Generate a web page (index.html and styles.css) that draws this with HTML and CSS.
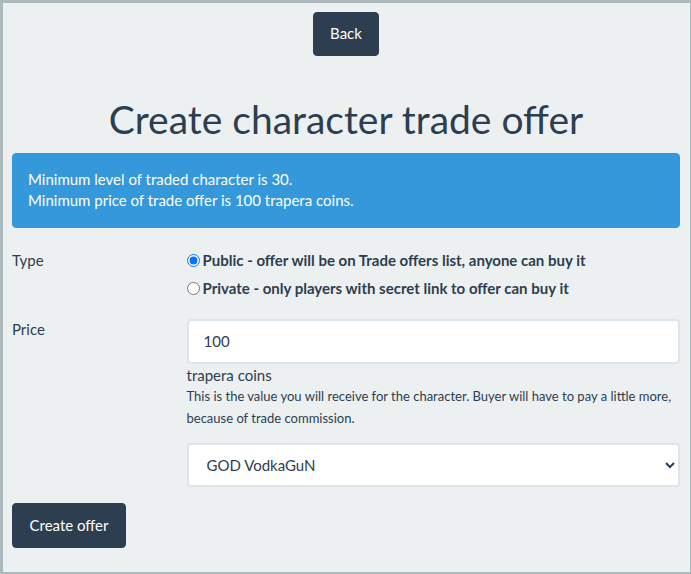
FILE: index.html
```html
<!DOCTYPE html>
<html lang="en">
<head>
  <title>Create character trade offer</title>
  <link rel="stylesheet" href="styles.css">
</head>
<body>
  <div class="frame">
    <div class="container">
      <div class="top">
        <a class="btn" href="#">Back</a>
      </div>

      <h1>Create character trade offer</h1>

      <div class="alert">
        Minimum level of traded character is 30.<br>
        Minimum price of trade offer is 100 trapera coins.
      </div>

      <form class="offer-form">
        <div class="form-row">
          <div class="form-label">Type</div>
          <div class="form-field">
            <label class="radio">
              <input type="radio" name="type" value="public" checked>
              Public - offer will be on Trade offers list, anyone can buy it
            </label>
            <label class="radio">
              <input type="radio" name="type" value="private">
              Private - only players with secret link to offer can buy it
            </label>
          </div>
        </div>

        <div class="form-row">
          <div class="form-label">Price</div>
          <div class="form-field">
            <input class="form-control" type="text" value="100">
            <p class="unit">trapera coins</p>
            <p class="help">This is the value you will receive for the character. Buyer will have to pay a little more, because of trade commission.</p>
            <select class="form-control select">
              <option>GOD VodkaGuN</option>
            </select>
          </div>
        </div>

        <button class="btn" type="submit">Create offer</button>
      </form>
    </div>
  </div>
</body>
</html>
```

FILE: styles.css
```css
html, body {
  margin: 0;
  height: 100%;
}

body {
  font-family: Lato, "Open Sans", sans-serif;
  font-size: 15px;
  line-height: 1.42857;
  color: #2c3e50;
  background-color: #ecf0f1;
}

.frame {
  box-sizing: border-box;
  height: 100%;
  border-style: solid;
  border-color: #aeb9be;
  border-width: 3px 1px 2px 3px;
  background-color: #ecf0f1;
}

.container {
  padding: 9px 10px 0 9px;
}

.top {
  text-align: center;
}

.btn {
  display: inline-block;
  box-sizing: border-box;
  height: 45px;
  padding: 11px 16.5px;
  font-family: inherit;
  font-size: 15px;
  line-height: 21px;
  color: #fff;
  background-color: #2c3e50;
  border: 1px solid #2c3e50;
  border-radius: 4px;
  text-decoration: none;
  cursor: pointer;
}

.top .btn {
  height: 44px;
  padding: 10px 16.5px;
}

h1 {
  margin: 42px 0 12px;
  font-size: 39px;
  font-weight: 400;
  line-height: 43px;
  text-align: center;
}

.alert {
  padding: 15px;
  margin-bottom: 21px;
  color: #fff;
  background-color: #3498db;
  border: 1px solid #3498db;
  border-radius: 4px;
}

.form-row {
  display: grid;
  grid-template-columns: 174.5px 1fr;
  margin-bottom: 13px;
}

.form-label {
  padding-top: 1px;
}

.form-row + .form-row .form-label {
  padding-top: 0;
}

.radio {
  display: flex;
  align-items: center;
  gap: 3px;
  margin-bottom: 7px;
  font-weight: 700;
  line-height: 21px;
  cursor: pointer;
}

.radio:first-child {
  margin-top: 1px;
}

.radio input {
  margin: 0;
  width: 13px;
  height: 13px;
}

.form-control {
  display: block;
  box-sizing: border-box;
  width: 100%;
  height: 45px;
  padding: 10px 15px;
  font-family: inherit;
  font-size: 15px;
  color: #2c3e50;
  background-color: #fff;
  border: 2px solid #dce4ec;
  border-radius: 4px;
}

.unit {
  margin: 1px 0 0;
}

.help {
  margin: 0 0 14px;
  font-size: 13px;
  line-height: 21.5px;
}

.select {
  height: 44px;
  padding-left: 14px;
}

.offer-form > .btn {
  margin-top: 3px;
}
```
